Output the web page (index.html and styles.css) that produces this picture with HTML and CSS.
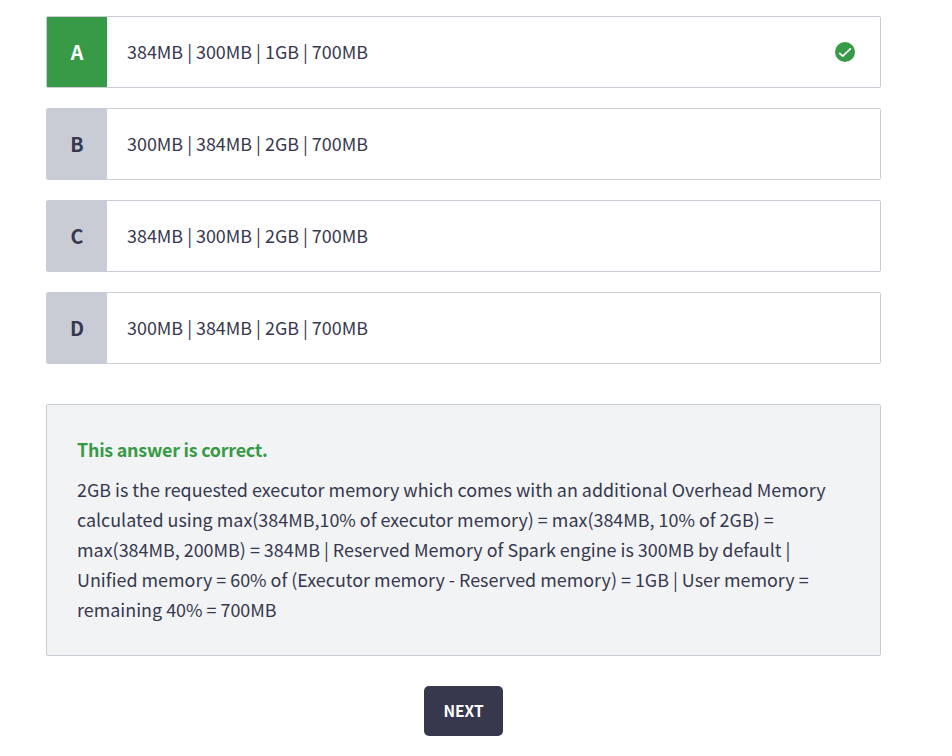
FILE: index.html
```html
<!DOCTYPE html>
<html lang="en">
<head>
<meta charset="utf-8">
<title>Quiz question</title>
<link rel="stylesheet" href="styles.css">
</head>
<body>
<main class="quiz">
  <ul class="options">
    <li class="option option--correct">
      <span class="option__letter">A</span>
      <span class="option__text">384MB | 300MB | 1GB | 700MB</span>
      <svg class="option__check" width="20" height="20" viewBox="0 0 20 20" aria-hidden="true">
        <circle cx="10" cy="10" r="10" fill="#379a46"/>
        <path d="M4.3 11l3.5 3.2L15.8 6.4" fill="none" stroke="#fff" stroke-width="1.7"/>
      </svg>
    </li>
    <li class="option">
      <span class="option__letter">B</span>
      <span class="option__text">300MB | 384MB | 2GB | 700MB</span>
    </li>
    <li class="option">
      <span class="option__letter">C</span>
      <span class="option__text">384MB | 300MB | 2GB | 700MB</span>
    </li>
    <li class="option">
      <span class="option__letter">D</span>
      <span class="option__text">300MB | 384MB | 2GB | 700MB</span>
    </li>
  </ul>
  <section class="feedback">
    <h2 class="feedback__title">This answer is correct.</h2>
    <p class="feedback__text">2GB is the requested executor memory which comes with an additional Overhead Memory<br>calculated using max(384MB,10% of executor memory) = max(384MB, 10% of 2GB) =<br>max(384MB, 200MB) = 384MB | Reserved Memory of Spark engine is 300MB by default |<br>Unified memory = 60% of (Executor memory - Reserved memory) = 1GB | User memory =<br>remaining 40% = 700MB</p>
  </section>
  <button class="next" type="button">NEXT</button>
</main>
</body>
</html>
```
FILE: styles.css
```css
* {
  box-sizing: border-box;
}

body {
  margin: 0;
  background: #fff;
  color: #37384e;
  font-family: "Noto Sans CJK SC", "Open Sans", sans-serif;
  font-size: 17.91px;
  line-height: 30px;
}

.quiz {
  display: flex;
  flex-direction: column;
  width: 835px;
  margin: 16px 0 0 46px;
}

.options {
  display: flex;
  flex-direction: column;
  gap: 20px;
  margin: 0;
  padding: 0;
  list-style: none;
}

.option {
  display: flex;
  align-items: center;
  height: 72px;
  padding-right: 25px;
  border: 1px solid #c9ccd5;
  border-radius: 2px;
}

.option__letter {
  display: flex;
  align-items: center;
  justify-content: center;
  align-self: stretch;
  width: 60px;
  background: #c9ccd5;
  font-size: 19.7px;
  font-weight: 600;
}

.option--correct .option__letter {
  background: #379a46;
  color: #fff;
}

.option__text {
  flex: 1;
  padding: 0 0 2px 20px;
  white-space: nowrap;
}

.feedback {
  height: 252px;
  margin-top: 40px;
  padding: 29px 30px 30px;
  border: 1px solid #c9ccd5;
  border-radius: 2px;
  background: #f1f3f5;
}

.feedback__title {
  margin: 0 0 10px;
  color: #379a46;
  font-size: 17.9px;
  font-weight: 600;
  letter-spacing: -0.24px;
  line-height: 30px;
}

.feedback__text {
  margin: 0;
  white-space: nowrap;
}

.next {
  align-self: center;
  width: 79px;
  height: 50px;
  margin-top: 30px;
  padding: 0 0 2px;
  border: 0;
  border-radius: 5px;
  background: #37384e;
  color: #fff;
  font: inherit;
  font-size: 15.5px;
  font-weight: 600;
}
```
